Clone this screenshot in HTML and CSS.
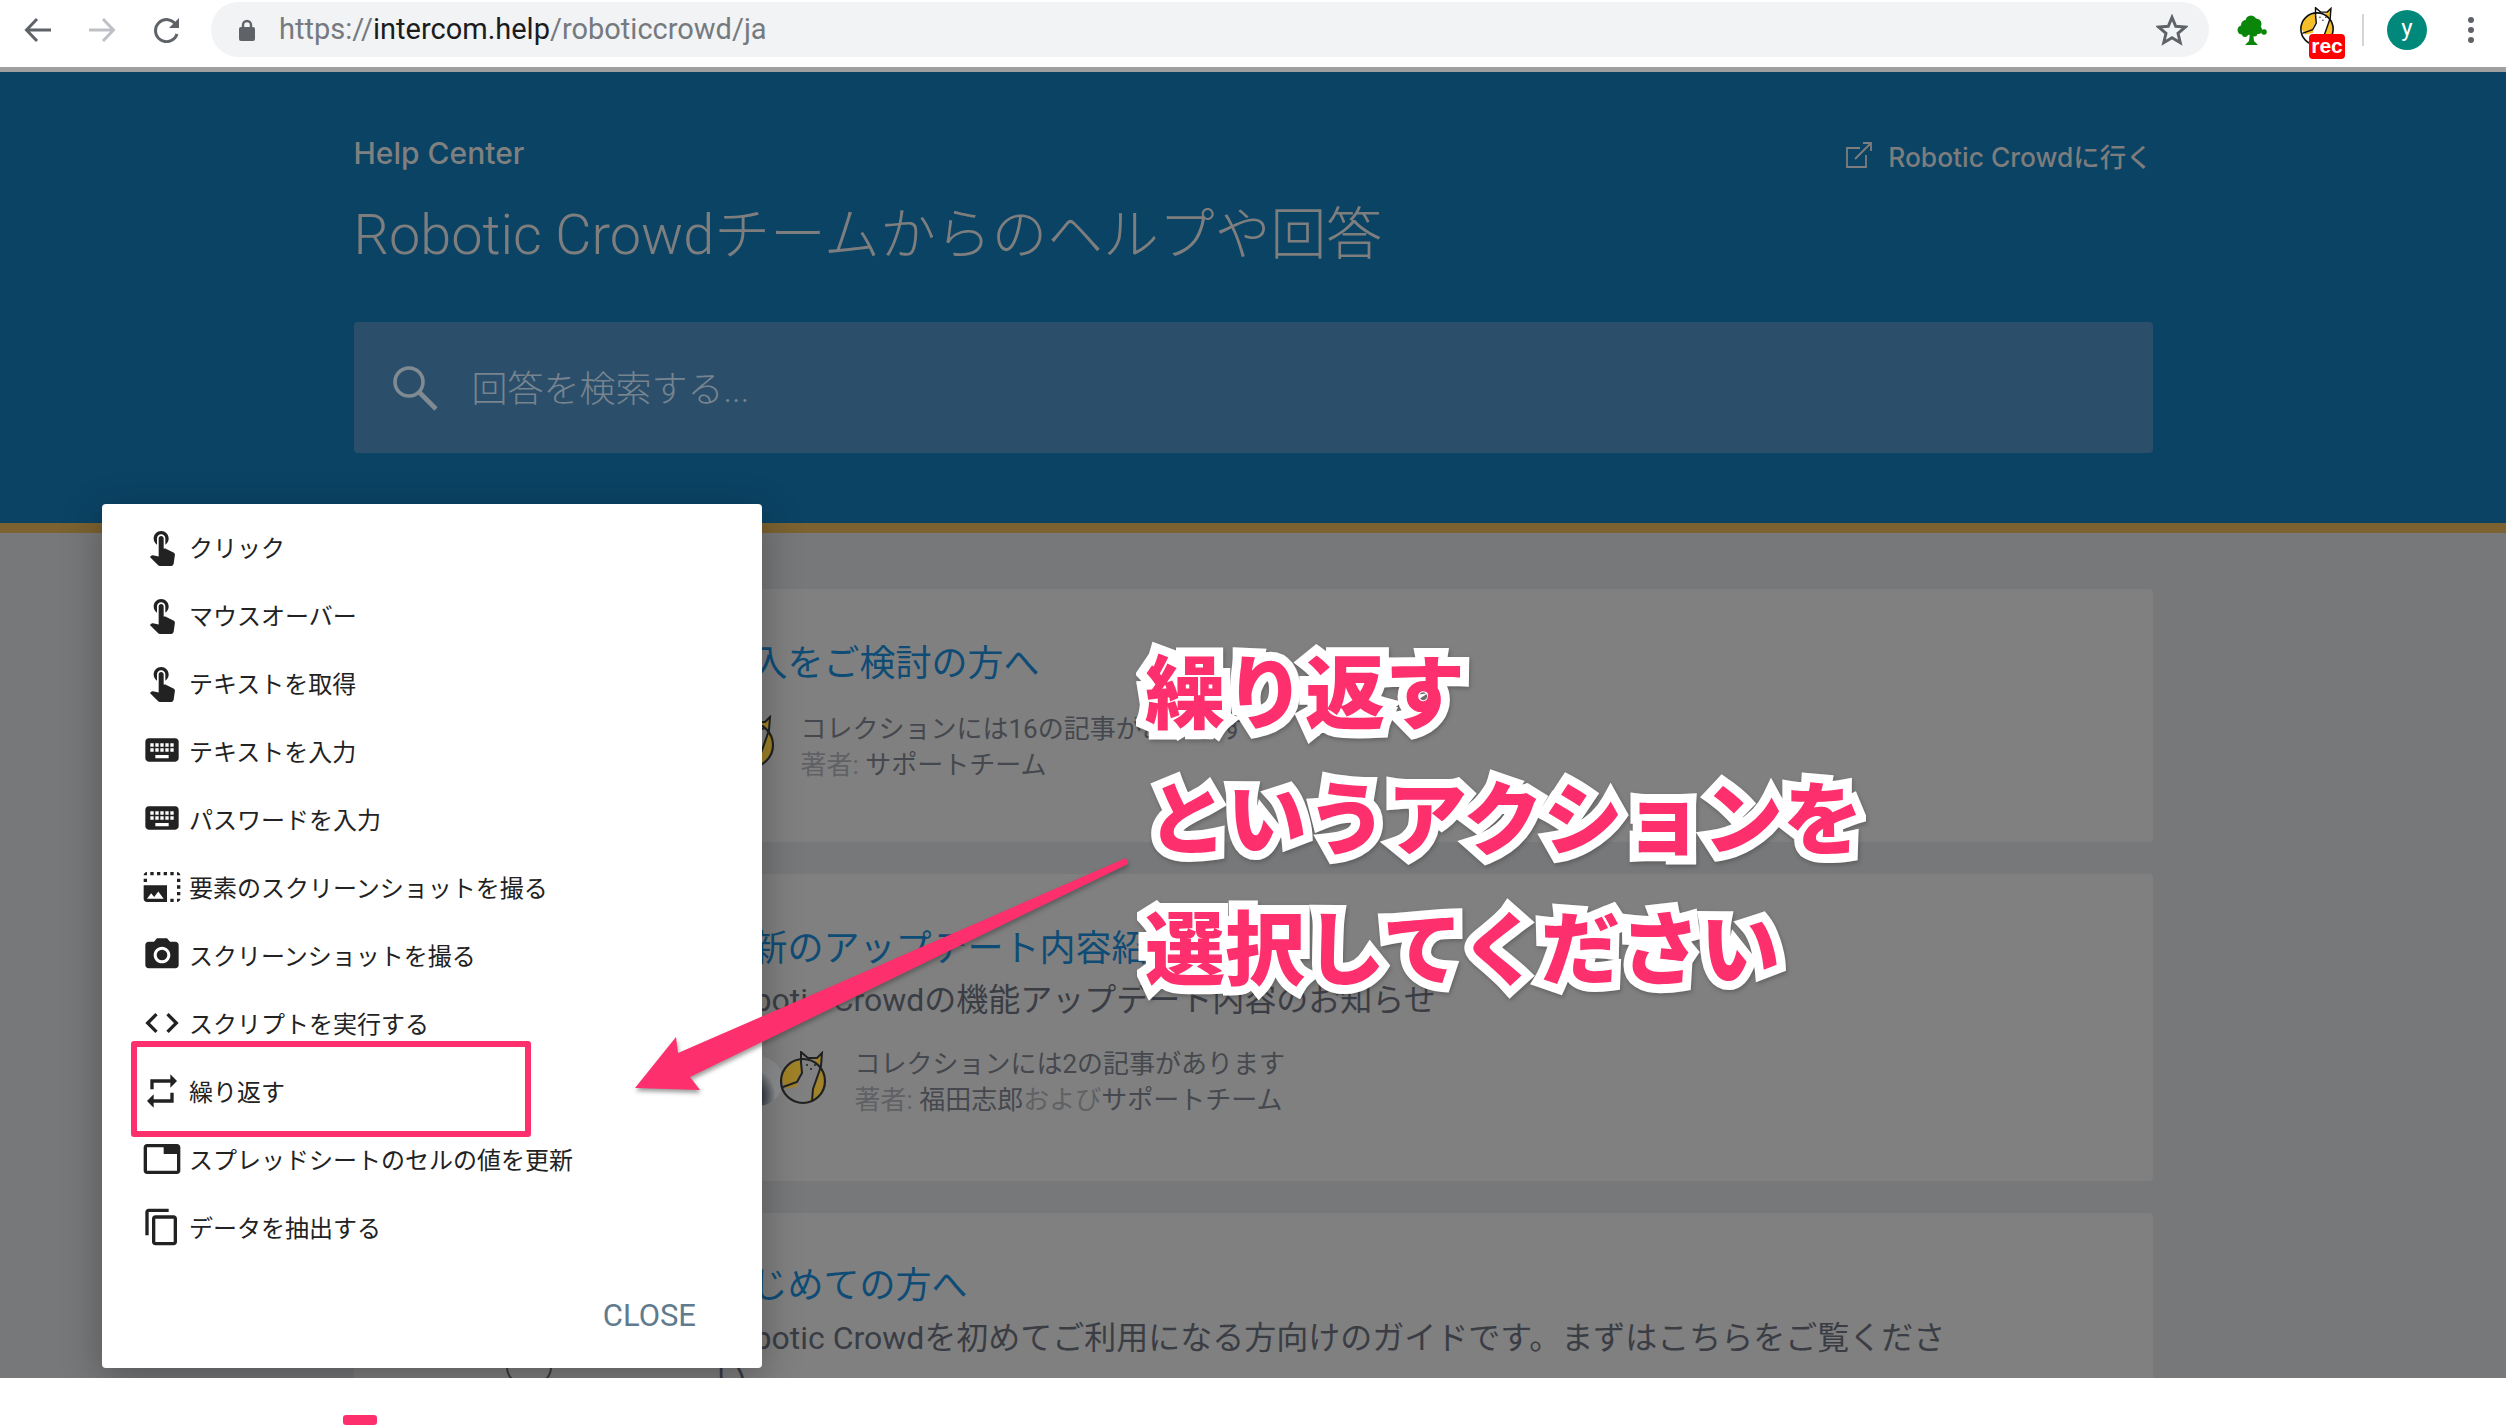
FILE: index.html
```html
<!DOCTYPE html>
<html lang="ja">
<head>
<meta charset="utf-8">
<title>Robotic Crowd</title>
<link rel="stylesheet" href="styles.css">
</head>
<body>
<svg class="defs" width="0" height="0" aria-hidden="true">
  <symbol id="i-touch" viewBox="0 0 24 24"><path d="M9 11.24V7.5C9 6.12 10.12 5 11.5 5S14 6.12 14 7.5v3.74c1.21-.81 2-2.18 2-3.74C16 5.01 13.99 3 11.5 3S7 5.01 7 7.5c0 1.56.79 2.93 2 3.74zm9.84 4.63l-4.54-2.26c-.17-.07-.35-.11-.54-.11H13v-6c0-.83-.67-1.5-1.5-1.5S10 6.67 10 7.5v10.74l-3.43-.72c-.08-.01-.15-.03-.24-.03-.31 0-.59.13-.79.33l-.79.8 4.94 4.94c.27.27.65.44 1.06.44h6.79c.75 0 1.33-.55 1.44-1.28l.75-5.27c.01-.07.02-.14.02-.2 0-.62-.38-1.16-.91-1.38z"/></symbol>
  <symbol id="i-keyboard" viewBox="0 0 24 24"><path d="M20 5H4c-1.1 0-1.99.9-1.99 2L2 17c0 1.1.9 2 2 2h16c1.1 0 2-.9 2-2V7c0-1.1-.9-2-2-2zm-9 3h2v2h-2V8zm0 3h2v2h-2v-2zM8 8h2v2H8V8zm0 3h2v2H8v-2zm-1 2H5v-2h2v2zm0-3H5V8h2v2zm9 7H8v-2h8v2zm0-4h-2v-2h2v2zm0-3h-2V8h2v2zm3 3h-2v-2h2v2zm0-3h-2V8h2v2z"/></symbol>
  <symbol id="i-cat" viewBox="0 0 60 60">
    <circle cx="30" cy="30" r="22" style="fill:var(--cat-w)"/>
    <path d="M9 30c-1-9 5-18 20-23l3 14-7 14-11 3z" style="fill:var(--cat-y)"/>
    <path d="M45 15l3 1c4 4 5 10 4 16-2 8-7 14-15 19l-1-12 5-17z" style="fill:var(--cat-y)"/>
    <path d="M28 11V1l7 6h9l5-5-1 13-2 6-6 17-1 9H27l-3-19 5-9z" style="fill:var(--cat-w)"/>
    <path d="M41 8l8-6-1 10-4 3z" style="fill:var(--cat-y)"/>
    <circle cx="30" cy="30" r="22" fill="none" style="stroke:var(--cat-l)" stroke-width="2.200"/>
    <path d="M28 11V1l7 6h9l5-5-1 13-2 6-6 17-1 12M28 11l1 11-5 9-14 5" fill="none" style="stroke:var(--cat-l)" stroke-width="2"/>
    <path d="M33 14h2M41 14h2M37 18h2" style="stroke:var(--cat-l)" stroke-width="1.400"/>
  </symbol>
</svg>

<header class="browser">
  <svg class="nav-icon" viewBox="0 0 28 26"><path d="M27 13H3M13 2 2.500 13 13 24" fill="none" stroke="#5f6368" stroke-width="3"/></svg>
  <svg class="nav-icon fwd" viewBox="0 0 28 26"><path d="M1 13h24M15 2l10.500 11L15 24" fill="none" stroke="#bdc1c6" stroke-width="3"/></svg>
  <svg class="nav-icon reload" viewBox="0 0 28 26"><path d="M24 17a11 11 0 1 1-1-9" fill="none" stroke="#5f6368" stroke-width="3"/><path d="M26 1v10H16z" fill="#5f6368"/></svg>
  <div class="urlbar">
    <svg class="lock" viewBox="0 0 16 22"><path d="M4 9V6a4 4 0 0 1 8 0v3" fill="none" stroke="#5f6368" stroke-width="2.400"/><rect y="8" width="16" height="14" rx="2" fill="#5f6368"/></svg>
    <span class="url"><span class="url-dim">https://</span>intercom.help<span class="url-dim">/roboticcrowd/ja</span></span>
    <svg class="star" viewBox="0 0 24 24"><path d="m12 2.500 2.800 6.700 7.200.6-5.500 4.700 1.700 7-6.200-3.700-6.200 3.700 1.700-7L2 9.800l7.200-.6z" fill="none" stroke="#5f6368" stroke-width="2.200"/></svg>
  </div>
  <svg class="ext-tree" viewBox="0 0 32 30" fill="#0a860a">
    <circle cx="14" cy="6" r="5.500"/><circle cx="9" cy="10" r="5"/><circle cx="19" cy="9" r="5.500"/><circle cx="5" cy="15" r="4.500"/><circle cx="12" cy="14" r="6"/><circle cx="21" cy="15" r="4"/><circle cx="27" cy="17" r="2.800"/><circle cx="17" cy="18" r="3.500"/><circle cx="8" cy="19" r="3"/>
    <path d="M13 18h3l1 8 4 4H8l4-4z"/>
  </svg>
  <div class="ext-rec">
    <svg class="ext-cat cat-live" viewBox="0 0 60 60"><use href="#i-cat"/></svg>
    <span class="rec">rec</span>
  </div>
  <span class="ext-sep"></span>
  <span class="profile">y</span>
  <span class="menu-dots"><i></i><i></i><i></i></span>
</header>

<section class="hero">
  <div class="wrap">
    <div class="hero-top">
      <span class="brand">Help Center</span>
      <a class="hero-link">
        <svg class="ext-link" viewBox="0 0 26 26"><path d="M20 13v12H1V6h13M9 17 25 1M17 1h8v8" fill="none" stroke="#7d7d7d" stroke-width="1.800"/></svg>
        Robotic Crowdに行く
      </a>
    </div>
    <h1 class="hero-title">Robotic Crowdチームからのヘルプや回答</h1>
    <div class="search">
      <svg class="search-icon" viewBox="0 0 46 46"><circle cx="17" cy="17" r="14" fill="none" stroke="#808a92" stroke-width="3.600"/><path d="m27 27 17 17" stroke="#808a92" stroke-width="4.600"/></svg>
      <span class="search-text">回答を検索する...</span>
    </div>
  </div>
</section>

<main class="content">
  <div class="wrap cards">
    <article class="card">
      <div class="card-body">
        <h2 class="card-title">導入をご検討の方へ</h2>
        <div class="meta">
          <svg class="avatar cat-dim" viewBox="0 0 60 60"><use href="#i-cat"/></svg>
          <div class="meta-text">
            <div>コレクションには16の記事があります</div>
            <div><span class="meta-dim">著者:</span> サポートチーム</div>
          </div>
        </div>
      </div>
    </article>
    <article class="card card-tall">
      <div class="card-body">
        <h2 class="card-title">最新のアップデート内容紹介</h2>
        <p class="card-desc">Robotic Crowdの機能アップデート内容のお知らせ</p>
        <div class="meta">
          <span class="person"></span>
          <svg class="avatar second cat-dim" viewBox="0 0 60 60"><use href="#i-cat"/></svg>
          <div class="meta-text">
            <div>コレクションには2の記事があります</div>
            <div><span class="meta-dim">著者:</span> 福田志郎<span class="meta-dim">および</span>サポートチーム</div>
          </div>
        </div>
      </div>
    </article>
    <article class="card card-last">
      <svg class="card-icon" viewBox="0 0 50 20"><path d="M3 0c0 10 8 18 22 18S47 10 47 0" fill="none" stroke="#3b3e42" stroke-width="2"/></svg>
      <div class="card-body">
        <h2 class="card-title">はじめての方へ</h2>
        <p class="card-desc limit">Robotic Crowdを初めてご利用になる方向けのガイドです。まずはこちらをご覧ください</p>
      </div>
    </article>
  </div>
</main>

<footer class="foot"><span class="foot-tab"></span></footer>

<aside class="modal">
  <ul class="actions">
    <li class="action"><svg class="a-icon"><use href="#i-touch"/></svg>クリック</li>
    <li class="action"><svg class="a-icon"><use href="#i-touch"/></svg>マウスオーバー</li>
    <li class="action"><svg class="a-icon"><use href="#i-touch"/></svg>テキストを取得</li>
    <li class="action"><svg class="a-icon"><use href="#i-keyboard"/></svg>テキストを入力</li>
    <li class="action"><svg class="a-icon"><use href="#i-keyboard"/></svg>パスワードを入力</li>
    <li class="action"><svg class="a-icon" viewBox="0 0 24 24"><path d="M21 15h2v2h-2v-2zm0-4h2v2h-2v-2zm2 8h-2v2c1 0 2-1 2-2zM13 3h2v2h-2V3zm8 4h2v2h-2V7zm0-4v2h2c0-1-1-2-2-2zM1 7h2v2H1V7zm16-4h2v2h-2V3zm0 16h2v2h-2v-2zM3 3C2 3 1 4 1 5h2V3zm6 0h2v2H9V3zM5 3h2v2H5V3zm-4 8v8c0 1.100.9 2 2 2h12V11H1zm2 8l2.500-3.210 1.790 2.150 2.500-3.220L13 19H3z"/></svg>要素のスクリーンショットを撮る</li>
    <li class="action"><svg class="a-icon" viewBox="0 0 24 24"><circle cx="12" cy="12" r="3.200"/><path d="M9 2L7.170 4H4c-1.100 0-2 .9-2 2v12c0 1.100.9 2 2 2h16c1.100 0 2-.9 2-2V6c0-1.100-.9-2-2-2h-3.170L15 2H9zm3 15c-2.760 0-5-2.240-5-5s2.240-5 5-5 5 2.240 5 5-2.240 5-5 5z"/></svg>スクリーンショットを撮る</li>
    <li class="action"><svg class="a-icon" viewBox="0 0 24 24"><path d="M9.400 16.600L4.800 12l4.600-4.600L8 6l-6 6 6 6 1.400-1.400zm5.200 0l4.600-4.600-4.600-4.600L16 6l6 6-6 6-1.400-1.400z"/></svg>スクリプトを実行する</li>
    <li class="action"><svg class="a-icon" viewBox="0 0 24 24"><path d="M7 7h10v3l4-4-4-4v3H5v6h2V7zm10 10H7v-3l-4 4 4 4v-3h12v-6h-2v4z"/></svg>繰り返す</li>
    <li class="action"><svg class="a-icon" viewBox="0 0 24 24"><path d="M21 3H3c-1.100 0-2 .9-2 2v14c0 1.100.9 2 2 2h18c1.100 0 2-.9 2-2V5c0-1.100-.9-2-2-2zm0 16H3V5h10v4h8v10z"/></svg>スプレッドシートのセルの値を更新</li>
    <li class="action"><svg class="a-icon" viewBox="0 0 24 24"><path d="M16 1H4c-1.100 0-2 .9-2 2v14h2V3h12V1zm3 4H8c-1.100 0-2 .9-2 2v14c0 1.100.9 2 2 2h11c1.100 0 2-.9 2-2V7c0-1.100-.9-2-2-2zm0 16H8V7h11v14z"/></svg>データを抽出する</li>
  </ul>
  <div class="modal-foot"><span class="close">CLOSE</span></div>
</aside>

<span class="highlight"></span>
<svg class="arrow" viewBox="0 0 600 300"><polygon points="526,8 78,203 76,187 35,238 100,240 90,227 528,14" fill="#fe2f6d"/></svg>
<div class="note note-1">繰り返す</div>
<div class="note note-2">というアクションを</div>
<div class="note note-3">選択してください</div>
</body>
</html>
```

FILE: styles.css
```css
* { box-sizing: border-box; }
html, body { margin: 0; padding: 0; }
body {
  position: relative;
  width: 2506px;
  height: 1426px;
  overflow: hidden;
  display: flex;
  flex-direction: column;
  background: #fff;
  font-family: Roboto, "Noto Sans CJK JP", sans-serif;
}
.defs { position: absolute; }
.cat-live { --cat-y: #f5bf2a; --cat-w: #fff; --cat-l: #111; }
.cat-dim { --cat-y: #a08228; --cat-w: #808080; --cat-l: #1f2123; }

/* browser chrome */
.browser {
  flex: none;
  height: 72px;
  display: flex;
  align-items: center;
  padding: 0 0 8px 24px;
  background: #fff;
  border-bottom: 5px solid #a0a0a0;
}
.nav-icon { width: 28px; height: 26px; flex: none; margin-right: 36px; }
.nav-icon.fwd { margin-right: 37px; }
.nav-icon.reload { margin-right: 30px; }
.urlbar {
  width: 1998px;
  height: 55px;
  flex: none;
  display: flex;
  align-items: center;
  padding: 0 21px 0 28px;
  background: #f1f3f4;
  border-radius: 28px;
}
.lock { width: 16px; height: 22px; flex: none; }
.url { margin-left: 24px; font: 400 29px/1 Roboto, sans-serif; color: #1b1c1e; }
.url-dim { color: #767a7f; }
.star { width: 32px; height: 32px; margin-left: auto; }
.ext-tree { width: 32px; height: 30px; margin-left: 28px; flex: none; }
.ext-rec { position: relative; width: 44px; height: 44px; margin-left: 32px; flex: none; }
.ext-cat { width: 44px; height: 44px; display: block; margin: -1px 0 0 -6px; }
.rec {
  position: absolute;
  left: 8px;
  top: 26px;
  width: 36px;
  height: 25px;
  border-radius: 4px;
  background: #f00;
  color: #fff;
  font: 700 21px/24px "Liberation Sans", sans-serif;
  text-align: center;
}
.ext-sep { width: 2px; height: 32px; margin-left: 17px; background: #d5d6d8; flex: none; }
.profile {
  width: 40px;
  height: 40px;
  margin-left: 23px;
  flex: none;
  border-radius: 50%;
  background: #00897b;
  color: #fff;
  font: 400 24px/36px Roboto, sans-serif;
  text-align: center;
}
.menu-dots { display: flex; flex-direction: column; gap: 4px; margin-left: 41px; flex: none; }
.menu-dots i { width: 6px; height: 6px; border-radius: 50%; background: #5f6368; }

/* hero */
.wrap { width: 1799px; margin: 0 auto; }
.hero {
  flex: none;
  height: 461px;
  padding-top: 60px;
  background: #0b4365;
  border-bottom: 10px solid #7b6230;
}
.hero-top { display: flex; justify-content: space-between; align-items: center; height: 42px; }
.brand { font-family: Inter, "Noto Sans CJK JP", sans-serif; font-size: 30px; font-weight: 500; color: #7f8080; }
.hero-link { display: flex; align-items: center; gap: 16px; font-family: Inter, "Noto Sans CJK JP", sans-serif; font-size: 26.400px; font-weight: 500; color: #7d7d7d; margin-top: 4px; }
.ext-link { width: 26px; height: 26px; flex: none; }
.hero-title {
  margin: 26px 0 52px;
  font-size: 55.800px;
  line-height: 70px;
  font-weight: 300;
  color: #7e7e7e;
}
.search {
  height: 131px;
  display: flex;
  align-items: center;
  padding-left: 38px;
  background: #2b4f6b;
  border-radius: 4px;
}
.search-icon { width: 46px; height: 46px; flex: none; }
.search-text { margin: 0 0 4px 34px; font-size: 36px; font-weight: 300; color: #77848f; }

/* content */
.content {
  flex: none;
  height: 845px;
  padding-top: 56px;
  overflow: hidden;
  background: #76787a;
}
.cards { display: flex; flex-direction: column; gap: 32px; }
.card {
  position: relative;
  display: flex;
  padding: 52px 0 59px 362px;
  background: #808080;
  border-radius: 4px;
}
.card-tall { padding-bottom: 63px; }
.card-last { padding-top: 50px; }
.card-icon { position: absolute; left: 150px; top: 154px; width: 50px; height: 20px; }
.card-title { margin: 0; font-size: 36px; line-height: 46px; font-weight: 400; color: #0f4c75; }
.card-desc { margin: 6px 0 0; font-size: 32px; line-height: 44px; font-weight: 400; color: #3a3d44; }
.card-desc.limit { width: 1240px; line-height: 40px; margin-top: 9px; }
.meta { display: flex; margin-top: 24px; }
.meta-text { font-size: 26px; line-height: 36px; color: #45484e; }
.meta-dim { color: #5f6164; }
.avatar { width: 60px; height: 60px; flex: none; margin: 4px 20px 0 5px; }
.avatar.second { margin: 5px 22px 0 0; position: relative; }
.person {
  width: 50px;
  height: 50px;
  flex: none;
  margin: 10px -10px 0 17px;
  border-radius: 50%;
  background: radial-gradient(circle at 25% 80%, #2f3640 0 28%, #8c8e90 55%, #87898c 100%);
}

/* footer */
.foot { flex: 1; position: relative; z-index: 1; background: #fff; }
.foot-tab {
  position: absolute;
  left: 343px;
  bottom: 1px;
  width: 34px;
  height: 10px;
  border-radius: 3px;
  background: #fe2f6d;
}

/* modal */
.modal {
  position: absolute;
  left: 102px;
  top: 504px;
  width: 660px;
  height: 864px;
  display: flex;
  flex-direction: column;
  background: #fff;
  border-radius: 4px;
  box-shadow: 0 10px 40px rgba(0, 0, 0, .3);
}
.actions { list-style: none; margin: 0; padding: 8px 0 0 40px; }
.action {
  height: 68.100px;
  display: flex;
  align-items: center;
  gap: 7px;
  font-size: 24px;
  font-weight: 400;
  color: #222;
}
.a-icon { width: 40px; height: 40px; flex: none; fill: #222; }
.modal-foot { margin-top: auto; padding: 0 66px 34px 0; text-align: right; }
.close { font-size: 31px; line-height: 36px; color: #5f7b8d; }

/* annotations */
.highlight {
  position: absolute;
  left: 131px;
  top: 1041px;
  width: 400px;
  height: 96px;
  border: 6px solid #fe2f6d;
  border-radius: 3px;
}
.arrow {
  position: absolute;
  left: 600px;
  top: 850px;
  width: 600px;
  height: 300px;
  filter: drop-shadow(1px 3px 2px rgba(60, 60, 60, .5));
}
.note {
  position: absolute;
  font-size: 80px;
  line-height: 100px;
  font-weight: 900;
  white-space: nowrap;
  font-family: "Noto Sans CJK JP", sans-serif;
  color: #fe2f6d;
  -webkit-text-stroke: 18px #fff;
  paint-order: stroke fill;
  stroke-linejoin: round;
  filter: drop-shadow(1px 2px 2px rgba(50, 50, 50, .4));
}
.note-1 { left: 1145px; top: 637px; }
.note-2 { left: 1147px; top: 763px; }
.note-3 { left: 1145px; top: 893px; }
```
